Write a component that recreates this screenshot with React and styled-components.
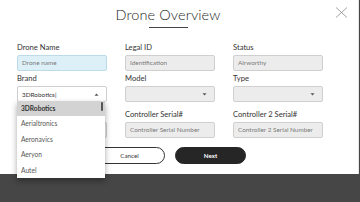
import styled, { createGlobalStyle } from "styled-components";

const Global = createGlobalStyle`
	html, body {
		margin: 0;
		padding: 0;
		background: #464646;
		font-family: Lato, "Open Sans", sans-serif;
	}
`;

const brands = ["3DRobotics", "Aerialtronics", "Aeronavics", "Aeryon", "Autel"];

const Field = ({ label, children }) => (
	<FieldBox>
		<Label>{label}</Label>
		{children}
	</FieldBox>
);

const Caret = ({ up }) => (
	<svg width="5" height="3" viewBox="0 0 5 3">
		<path d={up ? "M0.5 2.7 L2.5 0.5 L4.5 2.7 Z" : "M0.5 0.3 L2.5 2.5 L4.5 0.3 Z"} fill="#555" />
	</svg>
);

const App = () => {
	return (
		<>
			<Global />
			<Page>
				<Modal>
					<Close>
						<svg width="13" height="11" viewBox="0 0 13 11">
							<path d="M1 0.5 L12 10.5 M12 0.5 L1 10.5" stroke="#8a8a8a" strokeWidth="0.8" fill="none" />
						</svg>
					</Close>
					<Header>
						<Title>Drone Overview</Title>
						<Underline />
					</Header>
					<Grid>
						<Row>
							<Field label="Drone Name">
								<Input $focus>Drone name</Input>
							</Field>
							<Field label="Legal ID">
								<Input>Identification</Input>
							</Field>
							<Field label="Status">
								<Input>Airworthy</Input>
							</Field>
						</Row>
						<Row $top={2}>
							<Field label="Brand">
								<Select $open>
									<Value>3DRobotics|</Value>
									<Caret up />
								</Select>
							</Field>
							<Field label="Model">
								<Select>
									<span />
									<Caret />
								</Select>
							</Field>
							<Field label="Type">
								<Select>
									<span />
									<Caret />
								</Select>
							</Field>
						</Row>
						<Row $top={7}>
							<Field label={"\u00a0"}>
								<Input />
							</Field>
							<Field label="Controller Serial#">
								<Input>Controller Serial Number</Input>
							</Field>
							<Field label="Controller 2 Serial#">
								<Input>Controller 2 Serial Number</Input>
							</Field>
						</Row>
					</Grid>
					<Footer>
						<Button>Cancel</Button>
						<Button $primary>Next</Button>
					</Footer>
				</Modal>
				<Menu>
					{brands.map((b, i) => (
						<Option key={b} $active={i === 0}>
							{b}
						</Option>
					))}
					<Thumb />
				</Menu>
			</Page>
		</>
	);
};

export default App;

const Page = styled.div`
	position: relative;
	height: 202px;
`;

const Modal = styled.div`
	width: 359px;
	height: 174px;
	background: #fff;
	border-right: 1px solid #e6e6e6;
	box-sizing: border-box;
	padding-top: 6px;
	position: relative;
`;

const Close = styled.div`
	position: absolute;
	top: 7px;
	right: 10px;
	line-height: 0;
`;

const Header = styled.div`
	display: flex;
	flex-direction: column;
	align-items: center;
	height: 36px;
	padding-right: 22px;
`;

const Title = styled.div`
	font-size: 14.5px;
	font-weight: 300;
	line-height: 17px;
	color: #1e1e1e;
	letter-spacing: 0.1px;
`;

const Underline = styled.div`
	width: 39px;
	height: 1px;
	background: #444;
	margin-top: 4px;
`;

const Grid = styled.div`
	padding-left: 17px;
`;

const Row = styled.div`
	display: grid;
	grid-template-columns: 90px 90px 90px;
	column-gap: 18px;
	margin-top: ${(p) => p.$top || 0}px;
`;

const FieldBox = styled.div`
	display: flex;
	flex-direction: column;
`;

const Label = styled.div`
	font-size: 7.6px;
	line-height: 10px;
	color: #333;
	margin-bottom: 3px;
`;

const Input = styled.div`
	height: 16px;
	box-sizing: border-box;
	border: 1px solid ${(p) => (p.$focus ? "#bcdbe8" : "#cfcfcf")};
	background: ${(p) => (p.$focus ? "#ddf0f8" : "#ececec")};
	border-radius: 2px;
	padding-left: 4px;
	font-size: 6.4px;
	line-height: 14px;
	color: #7a7a7a;
	white-space: nowrap;
	overflow: hidden;
`;

const Select = styled.div`
	height: 16px;
	box-sizing: border-box;
	border: 1px solid #cfcfcf;
	background: ${(p) => (p.$open ? "#fff" : "#ececec")};
	border-radius: 2px;
	padding: 0 7px 0 4px;
	display: flex;
	align-items: center;
	justify-content: space-between;
`;

const Value = styled.span`
	font-size: 6.4px;
	color: #333;
`;

/* open brand list, hangs over the form and the backdrop */
const Menu = styled.div`
	position: absolute;
	top: 101px;
	left: 17px;
	width: 88px;
	background: #fff;
	box-shadow: 0 3px 6px rgba(0, 0, 0, 0.35);
	z-index: 10;
`;

const Option = styled.div`
	height: 15.4px;
	line-height: 15.4px;
	padding-left: 4px;
	font-size: 6.6px;
	font-weight: ${(p) => (p.$active ? 700 : 400)};
	color: ${(p) => (p.$active ? "#333" : "#555")};
	background: ${(p) => (p.$active ? "#d3d3d3" : "#fff")};
`;

const Thumb = styled.div`
	position: absolute;
	top: 1px;
	right: 2px;
	width: 2px;
	height: 9px;
	background: #555;
	border-radius: 1px;
`;

const Footer = styled.div`
	display: flex;
	gap: 10px;
	padding-left: 94px;
	margin-top: 9px;
`;

const Button = styled.div`
	width: 71px;
	height: 17px;
	box-sizing: border-box;
	border-radius: 9px;
	border: 1px solid ${(p) => (p.$primary ? "#262626" : "#333")};
	background: ${(p) => (p.$primary ? "#262626" : "#fff")};
	color: ${(p) => (p.$primary ? "#fff" : "#333")};
	font-size: 6.2px;
	font-weight: ${(p) => (p.$primary ? 700 : 400)};
	display: flex;
	align-items: center;
	justify-content: center;
`;
